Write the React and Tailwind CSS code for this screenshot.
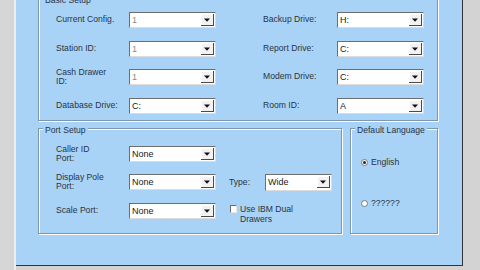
import React from 'react';

const font = "font-['Liberation_Sans',Arial,sans-serif]";

function Arrow() {
  return (
    <span className="mr-[1px] flex h-[12px] w-[13px] shrink-0 items-center justify-center border-r border-b border-r-[#4a4a4a] border-b-[#4a4a4a] bg-[#f2f2f2] shadow-[inset_1px_1px_0_#ffffff]">
      <svg width="6" height="4" viewBox="0 0 6 4">
        <path d="M0 0.5h6L3 3.8z" fill="#111" />
      </svg>
    </span>
  );
}

function Combo({ value, width = 'w-[87px]', dim, tall }) {
  return (
    <div
      className={`${width} ${tall ? 'h-[17px]' : 'h-[16px]'} flex shrink-0 items-center border border-t-[#6e6e6e] border-l-[#6e6e6e] border-r-[#dcdcdc] border-b-[#dcdcdc] bg-white`}
    >
      <span className={`flex-1 pl-[2px] text-[9px] leading-none ${dim ? 'text-[#8a8a8a]' : 'text-[#1a1a1a]'}`}>
        {value}
      </span>
      <Arrow />
    </div>
  );
}

function Group({ title, className, children }) {
  return (
    <div
      className={`relative shrink-0 border border-[#7f97ab] shadow-[inset_1px_1px_0_#ffffff,1px_1px_0_#ffffff] ${className}`}
    >
      <span className="absolute top-[-4px] left-[4px] bg-[#a9d3f6] px-[2px] text-[8.6px] leading-[10px] text-[#273446]">
        {title}
      </span>
      {children}
    </div>
  );
}

function Label({ lines, width }) {
  return (
    <div className={`${width} shrink-0 text-[8.6px] leading-[9.5px] text-[#273446]`}>
      {lines.map((l) => (
        <div key={l}>{l}</div>
      ))}
    </div>
  );
}

const basicLeft = [
  { label: ['Current Config.'], value: '1', dim: true, mt: 'mt-[13px]' },
  { label: ['Station ID:'], value: '1', dim: true, mt: 'mt-[13px]' },
  { label: ['Cash Drawer', 'ID:'], value: '1', dim: true, mt: 'mt-[12px]' },
  { label: ['Database Drive:'], value: 'C:', mt: 'mt-[13px]' },
];

const basicRight = [
  { label: ['Backup Drive:'], value: 'H:', mt: 'mt-[13px]' },
  { label: ['Report Drive:'], value: 'C:', mt: 'mt-[13px]' },
  { label: ['Modem Drive:'], value: 'C:', mt: 'mt-[12px]' },
  { label: ['Room ID:'], value: 'A', mt: 'mt-[13px]' },
];

export default function App() {
  return (
    <div className={`flex h-[270px] w-[480px] overflow-hidden bg-[#d3d3d3] ${font}`}>
      <div className="w-[14px] shrink-0 bg-[#d6d6d6]" />
      <div className="w-[2px] shrink-0 bg-[#ededed]" />
      <div className="flex h-[266px] w-[447px] shrink-0 flex-col border-r border-b border-[#333] bg-[#a9d3f6] pl-[22px]">
        {/* Basic Setup */}
        <Group title="Basic Setup" className="mt-[-2px] h-[123px] w-[400px]">
          <div className="flex">
            <div className="ml-[17px] flex flex-col">
              {basicLeft.map((r) => (
                <div key={r.label[0]} className={`${r.mt} flex h-[16px] items-center`}>
                  <Label lines={r.label} width="w-[73px]" />
                  <Combo value={r.value} dim={r.dim} />
                </div>
              ))}
            </div>
            <div className="ml-[47px] flex flex-col">
              {basicRight.map((r) => (
                <div key={r.label[0]} className={`${r.mt} flex h-[16px] items-center`}>
                  <Label lines={r.label} width="w-[74px]" />
                  <Combo value={r.value} />
                </div>
              ))}
            </div>
          </div>
        </Group>

        <div className="mt-[7px] flex gap-[8px]">
          {/* Port Setup */}
          <Group title="Port Setup" className="h-[106px] w-[304px]">
            <div className="ml-[17px] flex flex-col">
              <div className="mt-[17px] flex h-[16px] items-center">
                <Label lines={['Caller ID', 'Port:']} width="w-[73px]" />
                <Combo value="None" />
              </div>
              <div className="mt-[12px] flex h-[16px] items-center">
                <Label lines={['Display Pole', 'Port:']} width="w-[73px]" />
                <Combo value="None" />
                <span className="ml-[13px] w-[36px] text-[8.6px] text-[#273446]">Type:</span>
                <Combo value="Wide" width="w-[67px]" tall />
              </div>
              <div className="mt-[13px] flex h-[16px] items-center">
                <Label lines={['Scale Port:']} width="w-[73px]" />
                <Combo value="None" />
                <span className="ml-[14px] mt-[2px] h-[8px] w-[7px] shrink-0 self-start border border-t-[#6e6e6e] border-l-[#6e6e6e] border-r-[#e6e6e6] border-b-[#e6e6e6] bg-white" />
                <div className="ml-[3px] mt-[1px] self-start text-[8.6px] leading-[10px] text-[#273446]">
                  <div>Use IBM Dual</div>
                  <div>Drawers</div>
                </div>
              </div>
            </div>
          </Group>

          {/* Default Language */}
          <Group title="Default Language" className="h-[106px] w-[88px]">
            <div className="ml-[10px] flex flex-col">
              <div className="mt-[28px] flex items-center gap-[3px]">
                <span className="flex h-[7px] w-[7px] items-center justify-center rounded-full border border-[#7a7a7a] bg-white">
                  <span className="h-[3px] w-[3px] rounded-full bg-[#222]" />
                </span>
                <span className="text-[8.6px] leading-[10px] text-[#273446]">English</span>
              </div>
              <div className="mt-[31px] flex items-center gap-[3px]">
                <span className="h-[7px] w-[7px] rounded-full border border-[#7a7a7a] bg-white" />
                <span className="text-[8.6px] leading-[10px] text-[#273446]">??????</span>
              </div>
            </div>
          </Group>
        </div>
      </div>
    </div>
  );
}
